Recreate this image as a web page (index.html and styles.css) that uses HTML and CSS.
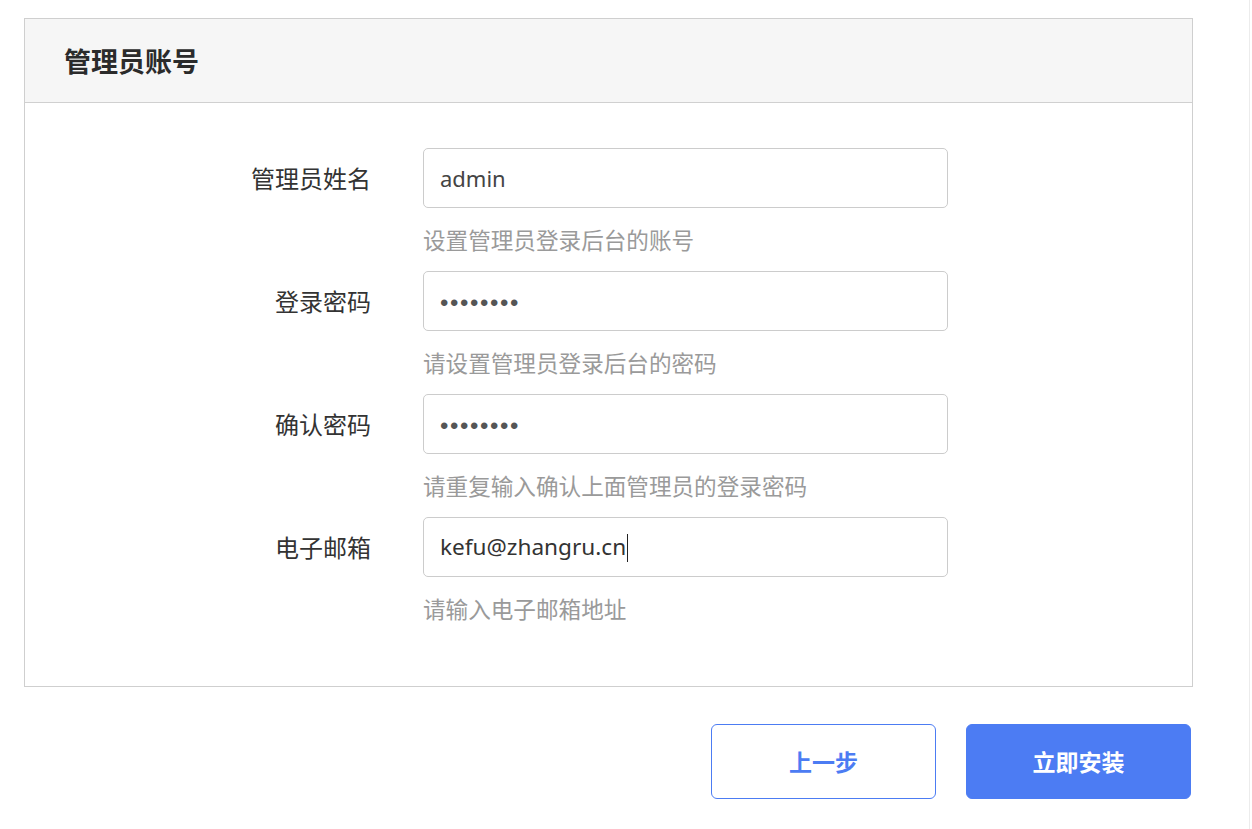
FILE: index.html
```html
<!DOCTYPE html>
<html lang="zh-CN">
<head>
<meta charset="utf-8">
<title>管理员账号</title>
<link rel="stylesheet" href="styles.css">
</head>
<body>
<div class="page">
  <section class="panel">
    <header class="panel-head">管理员账号</header>
    <div class="panel-body">
      <div class="row">
        <label class="label">管理员姓名</label>
        <div class="field">
          <input class="input" type="text" value="admin">
          <div class="hint">设置管理员登录后台的账号</div>
        </div>
      </div>
      <div class="row">
        <label class="label">登录密码</label>
        <div class="field">
          <input class="input pwd" type="password" value="12345678">
          <div class="hint">请设置管理员登录后台的密码</div>
        </div>
      </div>
      <div class="row">
        <label class="label">确认密码</label>
        <div class="field">
          <input class="input pwd" type="password" value="12345678">
          <div class="hint">请重复输入确认上面管理员的登录密码</div>
        </div>
      </div>
      <div class="row">
        <label class="label">电子邮箱</label>
        <div class="field">
          <div class="input fake">kefu@zhangru.cn<span class="caret"></span></div>
          <div class="hint">请输入电子邮箱地址</div>
        </div>
      </div>
    </div>
  </section>
  <div class="actions">
    <button class="btn btn-outline">上一步</button>
    <button class="btn btn-primary">立即安装</button>
  </div>
</div>
</body>
</html>
```
FILE: styles.css
```css
* { box-sizing: border-box; }
html, body { margin: 0; padding: 0; background: #fff; }
body {
  font-family: "Noto Sans", "Noto Sans CJK SC", sans-serif;
  color: #333;
}
body::after {
  content: "";
  position: fixed;
  top: 0;
  bottom: 0;
  right: 2px;
  width: 1px;
  background: #ececec;
}
.page {
  padding: 18px 0 0 24px;
  width: 1193px;
}
.panel {
  width: 1169px;
  border: 1px solid #cfcfcf;
  background: #fff;
}
.panel-head {
  height: 84px;
  background: #f6f6f6;
  border-bottom: 1px solid #d0d0d0;
  padding-left: 39px;
  font-family: "Noto Sans CJK SC", sans-serif;
  font-weight: 700;
  font-size: 27px;
  line-height: 83px;
  color: #2b2b2b;
}
.panel-body {
  padding: 45px 0 61px;
  display: flex;
  flex-direction: column;
  gap: 15px;
}
.row {
  display: flex;
  align-items: flex-start;
}
.label {
  width: 346px;
  text-align: right;
  font-family: "Noto Sans CJK SC", sans-serif;
  font-size: 24px;
  line-height: 60px;
  height: 60px;
  color: #333;
}
.field {
  margin-left: 52px;
  width: 525px;
}
.input {
  display: block;
  width: 525px;
  height: 60px;
  border: 1px solid #cccccc;
  border-radius: 5px;
  padding: 0 16px;
  font-family: "Noto Sans", "Noto Sans CJK SC", sans-serif;
  font-size: 22px;
  color: #444;
  background: #fff;
  outline: none;
}
.pwd {
  font-family: "Liberation Sans", sans-serif;
  font-size: 24px;
  letter-spacing: 1.6px;
  padding-top: 3px;
  color: #555;
}
.fake {
  line-height: 58px;
  font-size: 22.6px;
  color: #333;
}
.caret {
  display: inline-block;
  width: 1px;
  height: 28px;
  background: #222;
  vertical-align: -7px;
  margin-left: 1px;
}
.hint {
  margin-top: 16px;
  font-family: "Noto Sans CJK SC", sans-serif;
  font-size: 22.6px;
  line-height: 32px;
  color: #9a9a9a;
}
.actions {
  width: 1169px;
  display: flex;
  justify-content: flex-end;
  gap: 30px;
  margin-top: 37px;
  padding-right: 2px;
}
.btn {
  width: 225px;
  height: 75px;
  border-radius: 6px;
  font-family: "Noto Sans CJK SC", sans-serif;
  font-weight: 700;
  font-size: 23px;
  padding-bottom: 3px;
  cursor: pointer;
}
.btn-outline {
  background: #fff;
  color: #4c7cf3;
  border: 1px solid #4c7cf3;
}
.btn-primary {
  background: #4c7cf3;
  color: #fff;
  border: 1px solid #4c7cf3;
}
```
